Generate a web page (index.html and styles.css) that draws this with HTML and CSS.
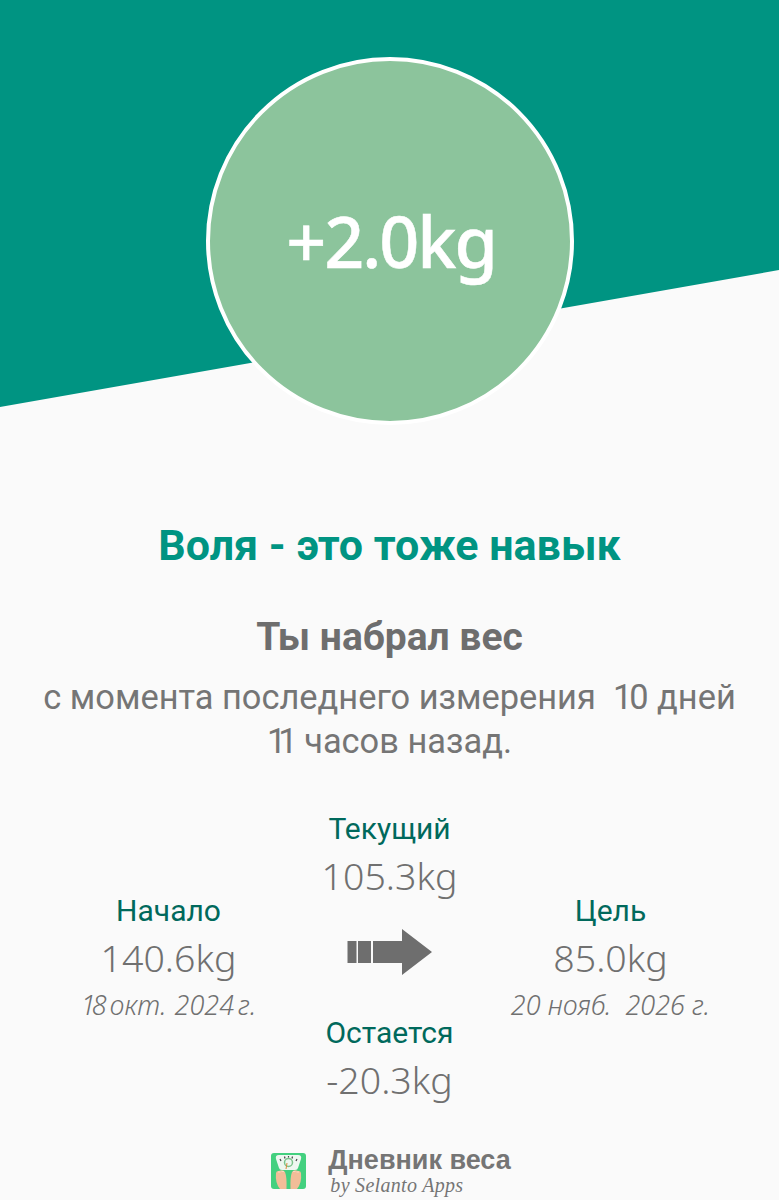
FILE: index.html
```html
<!DOCTYPE html>
<html lang="ru">
<head>
    <meta charset="UTF-8">
    <meta name="viewport" content="width=device-width, initial-scale=1.0">
    <title>Дневник веса</title>
    <link rel="stylesheet" href="styles.css">
</head>
<body>

    <!-- Teal banner with the weight change -->
    <div class="hero">
        <div class="circle">+2.0kg</div>
    </div>

    <h1 class="quote">Воля - это тоже навык</h1>
    <h2 class="status">Ты набрал вес</h2>
    <p class="since">с момента последнего измерения&nbsp; <span class="digits">10</span> дней<br><span class="digits-one">11</span> часов назад.</p>

    <div class="stats">
        <div class="stat">
            <div class="stat-label">Начало</div>
            <div class="stat-value">140.6kg</div>
            <div class="stat-date stat-date-short"><span class="date-day">18</span> окт.&nbsp; 2024 г.</div>
        </div>
        <div class="middle">
            <div class="stat">
                <div class="stat-label">Текущий</div>
                <div class="stat-value">105.3kg</div>
            </div>
            <svg class="arrow" width="86" height="48" viewBox="0 0 86 48">
                <rect x="0.5" y="13" width="9" height="22" fill="#6e6e6e"/>
                <rect x="11" y="13" width="13" height="22" fill="#6e6e6e"/>
                <path d="M26 13H55V1L85 24L55 47V35H26Z" fill="#6e6e6e"/>
            </svg>
            <div class="stat">
                <div class="stat-label">Остается</div>
                <div class="stat-value">-20.3kg</div>
            </div>
        </div>
        <div class="stat">
            <div class="stat-label">Цель</div>
            <div class="stat-value">85.0kg</div>
            <div class="stat-date">20 нояб.&nbsp; 2026 г.</div>
        </div>
    </div>

    <!-- App credit -->
    <div class="brand">
        <svg class="brand-icon" width="35" height="36" viewBox="0 0 35 36">
            <rect width="35" height="36" rx="3" fill="#43d07f"/>
            <!-- scale dial -->
            <path d="M8 2H27Q31 2 30 6L27 15Q26.500 17 24 17H11Q8.500 17 8 15L5 6Q4 2 8 2Z" fill="#eef7f1"/>
            <circle cx="17.500" cy="9.500" r="4" fill="none" stroke="#7cc48c" stroke-width="1.500"/>
            <path d="M9 6L10 8M26 6L25 8M13.500 3.500L14 5.500M21.500 3.500L21 5.500M17.500 3V4.500" stroke="#444" stroke-width="1.200"/>
            <path d="M16 10L15 16" stroke="#d98a3a" stroke-width="1"/>
            <!-- feet -->
            <path d="M5 20Q5.500 17.500 8 18Q12 16 14 19Q16 24 15.500 36H9Q4 30 5 20Z" fill="#f2bd98"/>
            <path d="M30 20Q29.500 17.500 27 18Q23 16 21 19Q19 24 19.500 36H26Q31 30 30 20Z" fill="#f2bd98"/>
            <path d="M7 19H9.500M10.500 18.500H13M25.500 19H28M22 18.500H24.500" stroke="#f8d9c2" stroke-width="1"/>
        </svg>
        <div class="brand-text">
            <div class="brand-name">Дневник веса</div>
            <div class="brand-by">by Selanto Apps</div>
        </div>
    </div>

</body>
</html>
```

FILE: styles.css
```css
body {
    margin: 0;
    height: 1200px;
    overflow: hidden;
    background-color: #fafafa;
    font-family: Roboto, sans-serif;
    text-align: center;
}
.hero {
    position: relative;
    height: 424px;
    display: flex;
    justify-content: center;
    padding-top: 57px;
    box-sizing: border-box;
}
.hero::before {
    content: "";
    position: absolute;
    top: 0;
    left: 0;
    right: 0;
    height: 408px;
    background-color: #009482;
    clip-path: polygon(0 0, 100% 0, 100% 270px, 0 407px);
}
.circle {
    position: relative;
    width: 368px;
    height: 368px;
    box-sizing: border-box;
    padding-left: 3px;
    border: 4px solid #fff;
    border-radius: 50%;
    background-color: #8cc49c;
    color: #fff;
    font-family: "Noto Sans", sans-serif;
    font-size: 70px;
    font-weight: 500;
    letter-spacing: -2px;
    -webkit-text-stroke: 0.5px #fff;
    display: flex;
    align-items: center;
    justify-content: center;
}
.quote {
    margin: 96px 0 0;
    font-size: 43px;
    line-height: 50px;
    font-weight: 700;
    color: #009482;
}
.status {
    margin: 45px 0 0;
    font-size: 39px;
    line-height: 44px;
    font-weight: 700;
    color: #6e6e6e;
}
.since {
    margin: 16px 0 0;
    font-size: 34.4px;
    line-height: 44px;
    color: #757575;
}
.digits {
    letter-spacing: -3px;
    margin-right: 3px;
}
.digits-one {
    letter-spacing: -8px;
    margin-right: 6px;
}
.stats {
    display: grid;
    grid-template-columns: repeat(3, 221px);
    justify-content: center;
    align-items: center;
    margin-top: 46px;
}
.stat-label {
    font-size: 30px;
    line-height: 40px;
    color: #00695c;
}
.stat-value {
    font-family: "Noto Sans", sans-serif;
    font-size: 37.5px;
    font-weight: 300;
    line-height: 54px;
    color: #707070;
}
.stat-date {
    font-family: "Noto Sans", sans-serif;
    font-size: 27px;
    font-weight: 300;
    font-style: italic;
    line-height: 40px;
    color: #707070;
    white-space: nowrap;
}
.stat-date-short {
    word-spacing: -3px;
}
.date-day {
    letter-spacing: -4px;
    margin-right: 3px;
}
.arrow {
    display: block;
    margin: 25px auto 37px;
}
.brand {
    display: flex;
    justify-content: center;
    align-items: center;
    gap: 22px;
    margin-top: 39px;
    padding-left: 3px;
}
.brand-text {
    text-align: left;
}
.brand-name {
    font-family: "Liberation Sans", sans-serif;
    font-size: 27px;
    line-height: 28px;
    font-weight: 700;
    color: #757575;
}
.brand-by {
    font-family: "Liberation Serif", serif;
    font-style: italic;
    font-size: 20px;
    line-height: 22px;
    letter-spacing: 0.3px;
    padding-left: 2px;
    color: #757575;
}
```
